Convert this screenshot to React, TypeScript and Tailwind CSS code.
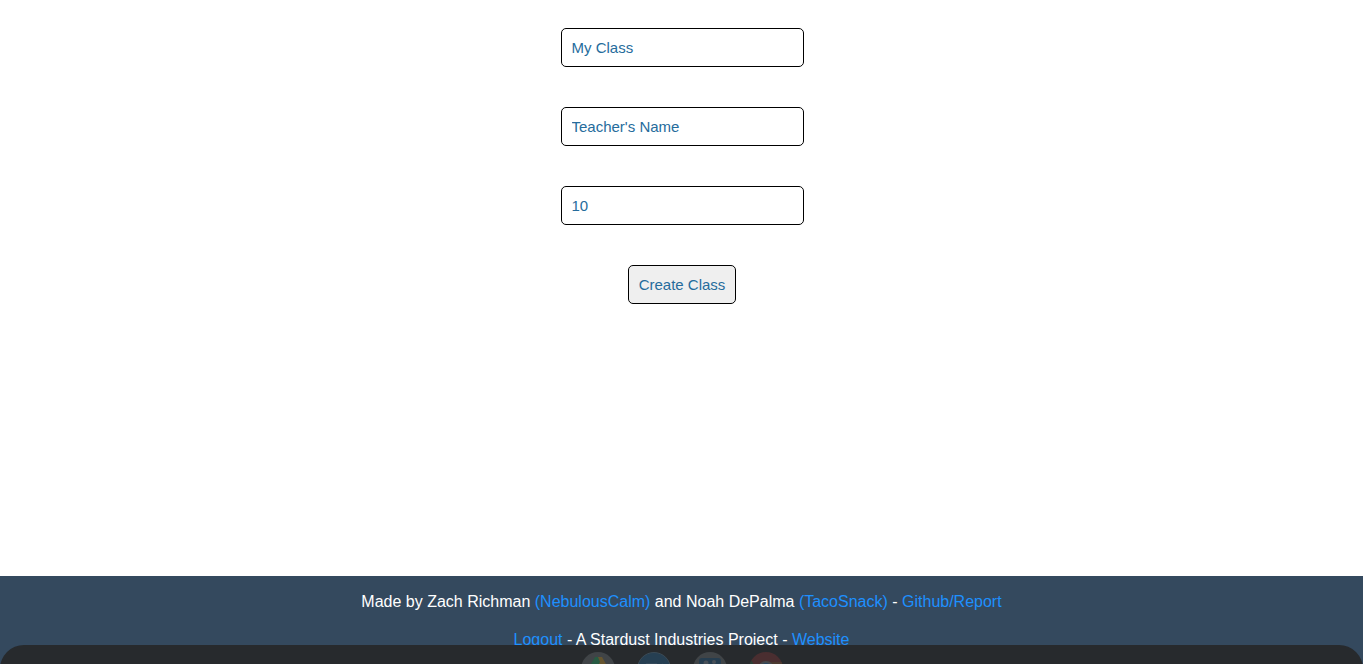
import type { ReactNode } from "react";

const field =
  "w-[243px] rounded-[5px] border border-black bg-white px-[10px] py-[10px] text-[15px] leading-[17px] text-[#266c9c] placeholder:text-[#266c9c] placeholder:opacity-100 focus:outline-none";

function FooterLink({ children }: { children: ReactNode }) {
  return (
    <a href="#" className="text-[#1e90ff]">
      {children}
    </a>
  );
}

function DriveIcon() {
  return (
    <svg viewBox="0 0 34 34" className="size-[34px]" aria-hidden="true">
      <circle cx="17" cy="17" r="17" fill="#404447" />
      <path d="M14 5h7l9 16h-7z" fill="#66552f" />
      <path d="M14 5h3l2 5L10 25l-4-6z" fill="#285a43" />
      <path d="M13 19h17l-4 6H10z" fill="#2c5274" />
    </svg>
  );
}

function ClassroomIcon() {
  return (
    <svg viewBox="0 0 34 34" className="size-[34px]" aria-hidden="true">
      <circle cx="17" cy="17" r="16.5" fill="#263f52" stroke="#3b4a55" />
      <path d="M9 11h11v11H9zM21 15l5-4v11l-5-4z" fill="#34495a" />
    </svg>
  );
}

function ContactsIcon() {
  return (
    <svg viewBox="0 0 34 34" className="size-[34px]" aria-hidden="true">
      <circle cx="17" cy="17" r="17" fill="#404447" />
      <rect x="6" y="6" width="22" height="21" rx="3" fill="#263d4f" />
      <circle cx="13" cy="11" r="2.5" fill="#485058" />
      <circle cx="21" cy="10" r="2" fill="#485058" />
      <path d="M8 20c0-8 10-8 10 0zM17 20c0-8 9-8 9 0z" fill="#485058" />
    </svg>
  );
}

function ChromeIcon() {
  return (
    <svg viewBox="0 0 34 34" className="size-[34px]" aria-hidden="true">
      <circle cx="17" cy="17" r="17" fill="#4a2e30" />
      <path d="M2.3 8.5L10 21l7 13A17 17 0 0 1 2.3 8.5z" fill="#2b4035" />
      <path d="M17 10h15.5A17 17 0 0 1 17 34l7-13z" fill="#4c3a30" />
      <circle cx="17" cy="17" r="8" fill="#46494c" />
      <circle cx="17" cy="17" r="6" fill="#294761" />
    </svg>
  );
}

function Dock() {
  return (
    <div className="pointer-events-none fixed inset-x-0 bottom-0 h-[19px] overflow-hidden">
      <div className="flex h-16 justify-center gap-[22px] rounded-t-[24px] bg-[#272a2d] pt-[7px] pl-px">
        <DriveIcon />
        <ClassroomIcon />
        <ContactsIcon />
        <ChromeIcon />
      </div>
    </div>
  );
}

export default function App() {
  return (
    <div className="flex min-h-screen flex-col bg-white font-[Arial,'Liberation_Sans',sans-serif]">
      <main className="flex-1">
        <form
          className="flex flex-col items-center gap-10 pt-7 pl-px"
          onSubmit={(event) => event.preventDefault()}
        >
          <input type="text" aria-label="Class name" placeholder="My Class" className={field} />
          <input type="text" aria-label="Teacher's name" placeholder="Teacher's Name" className={field} />
          <input type="text" inputMode="numeric" aria-label="Class size" defaultValue="10" className={field} />
          <button
            type="submit"
            className="rounded-[5px] border border-black bg-[#efefef] p-[10px] text-[15px] leading-[17px] text-[#266c9c]"
          >
            Create Class
          </button>
        </form>
      </main>
      <footer className="flex flex-col gap-5 bg-[#34495e] pt-[17px] pb-[15px] text-center text-base leading-[18px] text-white">
        <p>
          Made by Zach Richman <FooterLink>(NebulousCalm)</FooterLink> and Noah DePalma{" "}
          <FooterLink>(TacoSnack)</FooterLink> - <FooterLink>Github/Report</FooterLink>
        </p>
        <p>
          <FooterLink>Logout</FooterLink> - A Stardust Industries Project -{" "}
          <FooterLink>Website</FooterLink>
        </p>
      </footer>
      <Dock />
    </div>
  );
}
